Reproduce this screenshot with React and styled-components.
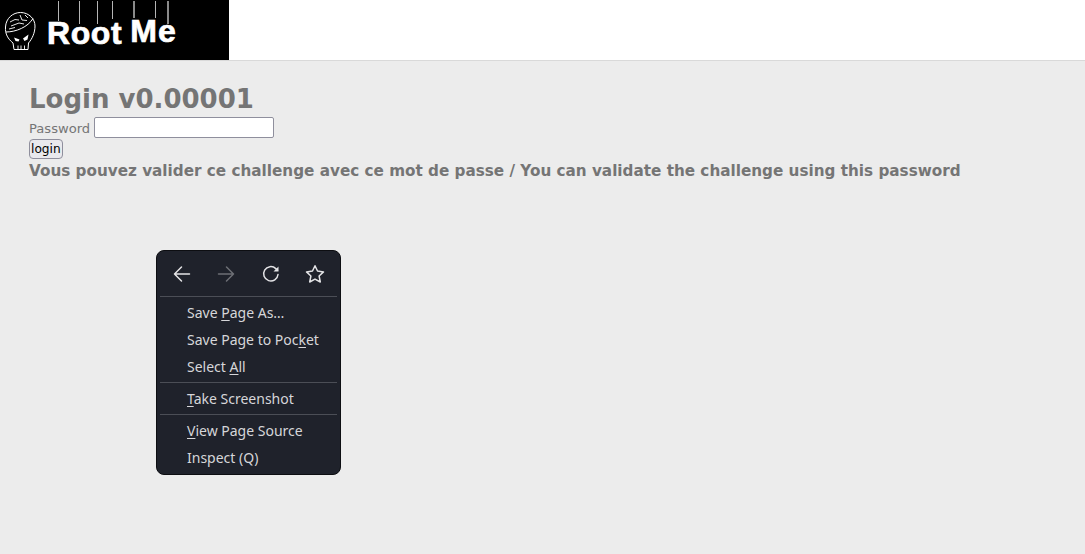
import React from 'react';
import styled, { createGlobalStyle } from 'styled-components';

const GlobalStyle = createGlobalStyle`
    html, body {
        margin: 0;
        padding: 0;
        height: 100%;
        background: #ececec;
    }

    body {
        font-family: "DejaVu Sans", sans-serif;
        color: #757575;
        overflow: hidden;
    }
`

const Banner = styled.header`
    display: flex;
    height: 60px;
    background: #fff;
    border-bottom: 1px solid #d9d9d9;
`

const Logo = styled.div`
    position: relative;
    display: flex;
    align-items: flex-start;
    gap: 8px;
    box-sizing: border-box;
    width: 229px;
    height: 60px;
    padding: 15px 0 0 47px;
    background: #000;
    overflow: hidden;
`

const LogoWord = styled.span`
    font-family: "Liberation Sans", Arial, sans-serif;
    font-weight: 700;
    font-size: 32px;
    line-height: 36px;
    letter-spacing: ${props => props.$spacing}px;
    color: #fff;
    -webkit-text-stroke: 0.7px #fff;
    white-space: nowrap;
    transform: translateY(${props => props.$lift || 0}px);
`

const LogoArt = styled.svg`
    position: absolute;
    left: 0;
    top: 0;
`

const Main = styled.main`
    display: flex;
    flex-direction: column;
    align-items: flex-start;
    padding: 23px 29px 0;
`

const Title = styled.h1`
    margin: 0;
    font-size: 26px;
    line-height: 31px;
    font-weight: 700;
`

const PasswordRow = styled.div`
    display: flex;
    align-items: center;
    gap: 4px;
    height: 21px;
    margin-top: 2px;
    font-size: 13.1px;
`

const PasswordLabel = styled.label`
    padding-top: 2px;
`

const PasswordInput = styled.input`
    box-sizing: border-box;
    width: 180px;
    height: 21px;
    padding: 1px 2px;
    background: #fff;
    border: 1px solid #8f8f9d;
    border-radius: 2px;
`

const LoginButton = styled.button`
    box-sizing: border-box;
    height: 20px;
    margin-top: 1px;
    padding: 0 1px;
    font-family: "DejaVu Sans", sans-serif;
    font-size: 12.2px;
    line-height: 17px;
    color: #000;
    background: #e9e9ed;
    border: 1px solid #8f8f9d;
    border-radius: 4px;
`

const Notice = styled.p`
    margin: 3px 0 0;
    font-size: 15.22px;
    line-height: 19px;
    font-weight: 700;
    white-space: nowrap;
`

const ContextMenu = styled.nav`
    position: absolute;
    left: 156px;
    top: 250px;
    box-sizing: border-box;
    width: 185px;
    height: 225px;
    padding: 0 3px;
    background: #1f222b;
    border: 1px solid #0d0e12;
    border-radius: 8px;
    font-family: "Noto Sans", sans-serif;
    font-size: 14px;
    color: #d6d6d9;
`

const NavBar = styled.div`
    display: flex;
    align-items: center;
    justify-content: space-between;
    box-sizing: border-box;
    height: 45px;
    padding: 1px 12px 0;
`

const NavIcon = styled.svg`
    width: 20px;
    height: 20px;
    fill: none;
    stroke: ${props => (props.$disabled ? '#6d6f75' : '#e4e4e6')};
    stroke-width: 1.5;
    stroke-linecap: round;
    stroke-linejoin: round;
`

const Divider = styled.hr`
    height: 1px;
    margin: 0;
    background: #4b4e56;
    border: 0;
`

const Group = styled.div`
    display: flex;
    flex-direction: column;
    padding: 2px 0;
`

const MenuItem = styled.div`
    height: 27px;
    padding-left: 27px;
    line-height: 28px;
    white-space: nowrap;

    u {
        text-underline-offset: 2px;
    }
`

function App() {
    return (
        <>
            <GlobalStyle />
            <Banner>
                <Logo>
                    <LogoArt width="229" height="60" viewBox="0 0 229 60">
                        {/* skull */}
                        <g fill="none" stroke="#fff" strokeWidth="1">
                            <path d="M13 43 C8 39 5 34 5.500 27 C6 18 13 12.500 20.500 12.500 C29 12.500 35 19 35 26 C35 33 32 39 28.500 43 L28 49.500 L14 49.500 Z" />
                            <path d="M6 32 C16 32 28 27 33 18.500" />
                            <path d="M10 22 L15 19.500 L19 20 M11 26 L19 23 L24 24 M20 15 L22 20 L27 20.500 M25 15 L28 18 M9 29 L15 27.500" strokeWidth="0.9" />
                            <path d="M18 49.500 V45.500 M21 49.500 V45.500 M24.500 49.500 V45.500" strokeWidth="0.9" />
                        </g>
                        <path d="M14 37.500 L19.500 39.500 L18.500 41.500 L15.500 41 Z M28.500 34.500 L23 38.500 L24.500 41 L27.500 39.500 Z" fill="#fff" />
                        {/* hanging strings */}
                        <g stroke="#b5b5b5" strokeWidth="1">
                            <path d="M58.500 1 V21 M79.500 1 V24 M97.500 1 V24 M112.500 1 V19 M155.500 1 V18" />
                        </g>
                        <path d="M134 1 V18 M168 1 V24" stroke="#8a8a8a" strokeWidth="2" />
                    </LogoArt>
                    <LogoWord $spacing={0.6}>Root</LogoWord>
                    <LogoWord $spacing={1.2} $lift={-2}>Me</LogoWord>
                </Logo>
            </Banner>
            <Main>
                <Title>Login v0.00001</Title>
                <PasswordRow>
                    <PasswordLabel>Password</PasswordLabel>
                    <PasswordInput type="password" />
                </PasswordRow>
                <LoginButton>login</LoginButton>
                <Notice>Vous pouvez valider ce challenge avec ce mot de passe / You can validate the challenge using this password</Notice>
            </Main>
            <ContextMenu>
                <NavBar>
                    <NavIcon viewBox="0 0 20 20">
                        <path d="M17.500 10 H2.500 M9.500 3 L2.500 10 L9.500 17" />
                    </NavIcon>
                    <NavIcon viewBox="0 0 20 20" $disabled>
                        <path d="M2.500 10 H17.500 M10.500 3 L17.500 10 L10.500 17" />
                    </NavIcon>
                    <NavIcon viewBox="0 0 20 20">
                        <path d="M17 10.500 A7.200 7.200 0 1 1 14.800 4.600 L16.500 6.300" />
                        <path d="M17.500 2.500 V7.500 H12.500 Z" fill="#e4e4e6" stroke="none" />
                    </NavIcon>
                    <NavIcon viewBox="0 0 20 20">
                        <path d="M10 1.800 L12.500 7 L18.500 7.900 L14.100 12 L15.300 18 L10 15.100 L4.700 18 L5.900 12 L1.500 7.900 L7.500 7 Z" />
                    </NavIcon>
                </NavBar>
                <Divider />
                <Group>
                    <MenuItem>Save <u>P</u>age As…</MenuItem>
                    <MenuItem>Save Page to Poc<u>k</u>et</MenuItem>
                    <MenuItem>Select <u>A</u>ll</MenuItem>
                </Group>
                <Divider />
                <Group>
                    <MenuItem><u>T</u>ake Screenshot</MenuItem>
                </Group>
                <Divider />
                <Group>
                    <MenuItem><u>V</u>iew Page Source</MenuItem>
                    <MenuItem>Inspect (Q)</MenuItem>
                </Group>
            </ContextMenu>
        </>
    );
}

export default App;
